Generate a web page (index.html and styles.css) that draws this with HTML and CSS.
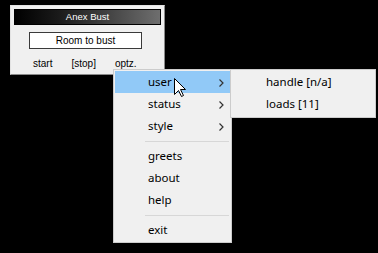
FILE: index.html
```html
<!DOCTYPE html>
<html>
<head>
    <title>Anex Bust</title>
    <link rel="stylesheet" href="styles.css">
</head>
<body>
    <div class="window">
        <div class="title">Anex Bust</div>
        <div class="field">Room to bust</div>
        <div class="buttons">
            <span>start</span>
            <span>[stop]</span>
            <span>optz.</span>
        </div>
    </div>

    <div class="menu">
        <div class="item active">user<svg class="chevron" width="5" height="8" viewBox="0 0 5 8"><path d="M0.5 0.5 L4 4 L0.5 7.5" fill="none" stroke="#333" stroke-width="1.2"/></svg></div>
        <div class="item">status<svg class="chevron" width="5" height="8" viewBox="0 0 5 8"><path d="M0.5 0.5 L4 4 L0.5 7.5" fill="none" stroke="#333" stroke-width="1.2"/></svg></div>
        <div class="item">style<svg class="chevron" width="5" height="8" viewBox="0 0 5 8"><path d="M0.5 0.5 L4 4 L0.5 7.5" fill="none" stroke="#333" stroke-width="1.2"/></svg></div>
        <div class="sep"></div>
        <div class="item">greets</div>
        <div class="item">about</div>
        <div class="item">help</div>
        <div class="sep"></div>
        <div class="item">exit</div>
    </div>

    <div class="menu submenu">
        <div class="item">handle [n/a]</div>
        <div class="item">loads [11]</div>
    </div>

    <svg class="cursor" width="13" height="20" viewBox="0 0 13 20">
        <path d="M0.5 0.5 L0.5 16.5 L4.5 12.5 L7.5 18.5 L9.5 17.5 L6.5 11.5 L11.5 11.5 Z" fill="#fff" stroke="#000" stroke-width="1"/>
    </svg>
</body>
</html>
```

FILE: styles.css
```css
* {
    box-sizing: border-box;
    margin: 0;
    padding: 0;
}

body {
    background-color: #000;
    padding: 5px 0 0 10px;
    font-family: 'Liberation Sans', Arial, sans-serif;
    color: #000;
}

.window {
    width: 155px;
    height: 70px;
    background-color: #f0f0f0;
    border: 1px solid;
    border-color: #e3e3e3 #8a8a8a #8a8a8a #e3e3e3;
    padding: 3px;
}

.title {
    height: 16px;
    border: 1px solid #000;
    background: linear-gradient(to right, #000 0%, #1a1a1a 30%, #6e6e6e 100%);
    color: #fff;
    font-size: 9.5px;
    line-height: 14px;
    text-align: center;
}

.field {
    width: 113px;
    height: 17px;
    margin: 7px 0 0 15px;
    border: 1px solid #3a3a3a;
    background-color: #fff;
    font-size: 10px;
    line-height: 15px;
    text-align: center;
}

.buttons {
    display: flex;
    gap: 19px;
    margin-top: 9px;
    padding-left: 19px;
    font-size: 10px;
    line-height: 12px;
}

.menu {
    position: absolute;
    left: 113px;
    top: 69px;
    width: 119px;
    background-color: #f0f0f0;
    border: 1px solid #cccccc;
    padding: 1px;
    font-family: 'Noto Sans', sans-serif;
    font-size: 11.5px;
}

.item {
    position: relative;
    height: 22px;
    line-height: 22px;
    padding-left: 33px;
}

.item.active {
    background-color: #91c9f7;
}

.chevron {
    position: absolute;
    right: 6px;
    top: 8px;
}

.sep {
    height: 8px;
    margin: 0 1px 0 30px;
    background: linear-gradient(#d7d7d7, #d7d7d7) no-repeat 0 4px / 100% 1px;
}

.submenu {
    left: 230px;
    width: 146px;
    padding: 1px 1px 2px;
}

.submenu .item {
    padding-left: 34px;
}

.cursor {
    position: absolute;
    left: 174px;
    top: 78px;
}
```
